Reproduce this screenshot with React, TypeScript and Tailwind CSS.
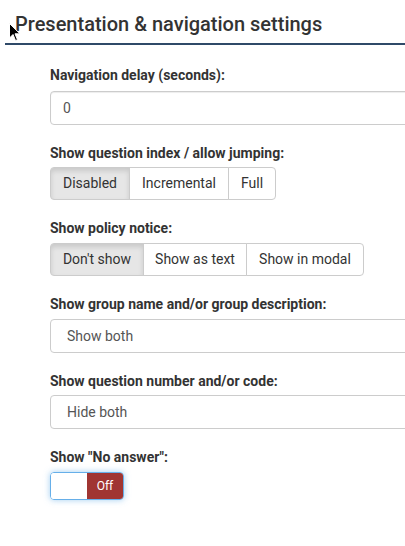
import React from "react";

const font = { fontFamily: "Roboto, 'Liberation Sans', Arial, sans-serif" };

function Label({ children, gap = "mb-[5px]" }: { children: React.ReactNode; gap?: string }) {
  return (
    <div className={"h-5 leading-5 text-[14px] font-bold text-[#333] " + gap}>
      {children}
    </div>
  );
}

function TextBox({ value }: { value: string }) {
  return (
    <div className="h-[34px] w-[380px] border border-[#ccc] rounded-[4px] flex items-center px-3 text-[14px] text-[#555] bg-white shadow-[inset_0_1px_1px_rgba(0,0,0,0.075)]">
      {value}
    </div>
  );
}

function SelectBox({ value }: { value: string }) {
  return (
    <div className="h-[34px] w-[380px] border border-[#ccc] rounded-[4px] flex items-center pl-4 text-[14px] text-[#555] bg-white">
      {value}
    </div>
  );
}

function ButtonGroup({ items, active, widths }: { items: string[]; active: number; widths: number[] }) {
  return (
    <div className="flex h-[33px]">
      {items.map((t, i) => (
        <div
          key={t}
          style={{ width: widths[i] }}
          className={
            "flex items-center justify-center text-[14px] text-[#333] border border-[#ccc] " +
            (i > 0 ? "-ml-px " : "") +
            (i === 0 ? "rounded-l-[4px] " : "") +
            (i === items.length - 1 ? "rounded-r-[4px] " : "") +
            (i === active
              ? "bg-[#e6e6e6] border-[#adadad] shadow-[inset_0_3px_5px_rgba(0,0,0,0.125)]"
              : "bg-white")
          }
        >
          {t}
        </div>
      ))}
    </div>
  );
}

function Pointer() {
  return (
    <svg className="absolute left-[9px] top-[23px]" width="12" height="19" viewBox="0 0 12 19">
      <path d="M0.5 0.5 L0.5 15 L4 11.5 L6.5 17.5 L8.5 16.7 L6 10.8 L11 10.8 Z" fill="#000" stroke="#fff" strokeWidth="1" />
    </svg>
  );
}

export default function App() {
  return (
    <div className="relative w-[405px] h-[546px] overflow-hidden bg-white" style={font}>
      <div className="pl-[5px] pt-[12px]">
        <div className="border-b-2 border-[#2f4a68] w-[420px] pb-[7px]">
          <h2 className="pl-[10px] text-[20px] leading-[24px] font-medium text-[#333]">
            Presentation &amp; navigation settings
          </h2>
        </div>
      </div>
      <div className="pl-[50px] pt-[20px] flex flex-col gap-[18px]">
        <div>
          <Label gap="mb-[6px]">Navigation delay (seconds):</Label>
          <TextBox value="0" />
        </div>
        <div>
          <Label gap="mb-[4px]">Show question index / allow jumping:</Label>
          <ButtonGroup items={["Disabled", "Incremental", "Full"]} active={0} widths={[80, 100, 48]} />
        </div>
        <div>
          <Label>Show policy notice:</Label>
          <ButtonGroup items={["Don't show", "Show as text", "Show in modal"]} active={0} widths={[94, 104, 118]} />
        </div>
        <div>
          <Label>Show group name and/or group description:</Label>
          <SelectBox value="Show both" />
        </div>
        <div>
          <Label gap="mb-[4px]">Show question number and/or code:</Label>
          <SelectBox value="Hide both" />
        </div>
        <div>
          <Label>Show "No answer":</Label>
          <div className="flex w-[74px] h-[28px] rounded-[4px] border border-[#66afe9] overflow-hidden shadow-[0_0_6px_rgba(102,175,233,0.6)]">
            <div className="w-1/2 bg-white" />
            <div className="w-1/2 bg-[#a03532] text-white text-[12px] flex items-center justify-center">Off</div>
          </div>
        </div>
      </div>
      <Pointer />
    </div>
  );
}
